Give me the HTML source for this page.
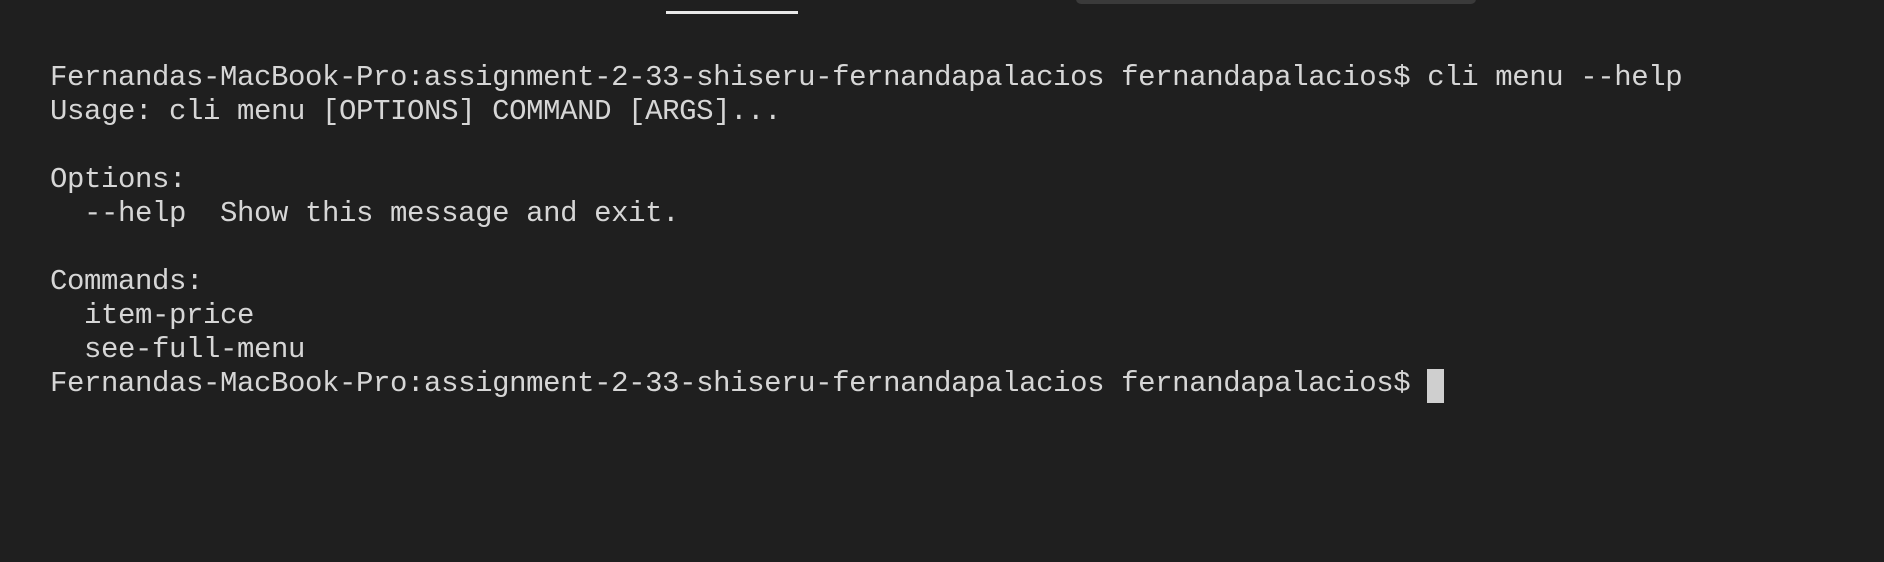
<!DOCTYPE html>
<html><head><style>
html,body{margin:0;padding:0;background:#1f1f1f;width:1884px;height:562px;overflow:hidden;position:relative}
.tab{position:absolute;left:1076px;top:-6px;width:400px;height:10px;background:#3a3a3a;border-radius:6px}
.ul{position:absolute;left:666px;top:11px;width:132px;height:3px;background:#e8e8e8}
pre{position:absolute;left:50px;top:61px;margin:0;font-family:"Liberation Mono",monospace;font-size:29px;letter-spacing:-0.4px;line-height:34px;color:#d6d6d6}
.cur{position:absolute;left:1427px;top:369px;width:17px;height:34px;background:#cfcfcf}
</style></head><body>
<div class="tab"></div><div class="ul"></div>
<pre>Fernandas-MacBook-Pro:assignment-2-33-shiseru-fernandapalacios fernandapalacios$ cli menu --help
Usage: cli menu [OPTIONS] COMMAND [ARGS]...

Options:
  --help  Show this message and exit.

Commands:
  item-price
  see-full-menu
Fernandas-MacBook-Pro:assignment-2-33-shiseru-fernandapalacios fernandapalacios$ </pre>
<div class="cur"></div>
</body></html>
